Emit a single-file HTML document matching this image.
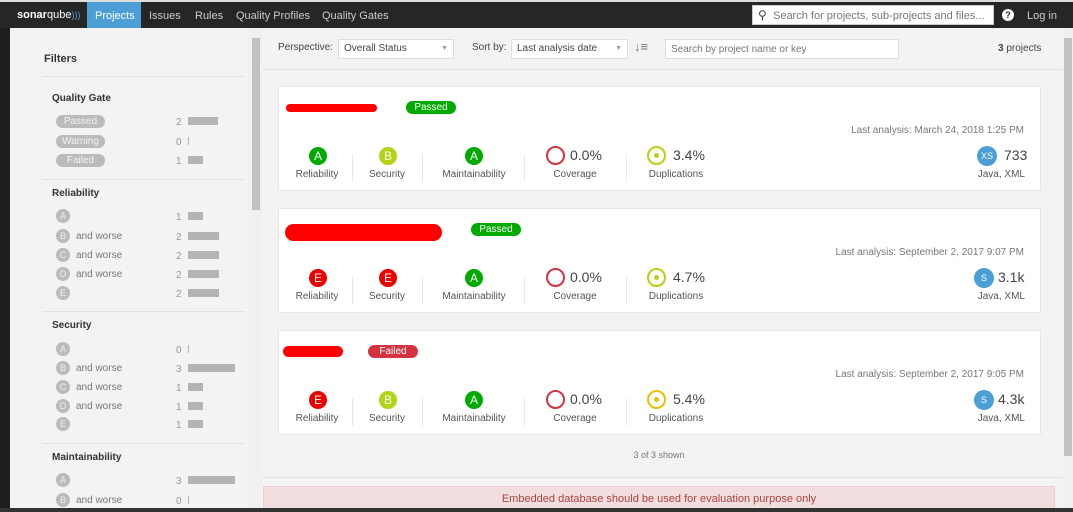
<!DOCTYPE html>
<html><head><meta charset="utf-8"><style>
*{box-sizing:border-box;margin:0;padding:0}
body{width:1073px;height:512px;overflow:hidden;background:#f3f3f3;font-family:"Liberation Sans",sans-serif;color:#444;position:relative;font-size:11px}
.a{position:absolute}
.nav{left:0;top:0;width:1073px;height:28px;background:#262626;border-top:2px solid #ddd}
.nav span{position:absolute;top:8px;color:#ccc;font-size:11px}
.lt{left:0;top:0;width:10px;height:512px;background:#1e1e1e}
.side{left:10px;top:28px;width:238px;height:484px;background:#f3f3f3}
.sb{left:248px;top:28px;width:14px;height:484px;background:#f0f0f0}
.hr{height:1px;background:#e2e2e2}
.h{font-weight:bold;font-size:11px;color:#333}
.pill{background:#bbb;color:#f3f3f3;border-radius:8px;width:49px;height:13px;text-align:center;font-size:10px;line-height:13px}
.rc{width:14px;height:14px;border-radius:50%;background:#bbb;color:#eee;font-size:9px;text-align:center;line-height:14px}
.aw{color:#777;font-size:10px}
.num{color:#999;font-size:10px;margin-top:2px}
.bar{background:#b4b4b4;height:8px}
.card{left:278px;width:763px;height:105px;background:#fff;border:1px solid #e6e6e6}
.c{position:absolute;width:18px;height:18px;border-radius:50%;color:#fff;text-align:center;line-height:18px;font-size:12px}
.lb{position:absolute;font-size:10px;color:#555;text-align:center;width:100px}
.dv{position:absolute;width:1px;height:28px;background:#e8e8e8}
.badge{position:absolute;height:13px;border-radius:7px;color:#fff;font-size:10px;text-align:center;line-height:13px;width:50px}
.la{position:absolute;right:16px;font-size:10px;color:#777}
.pct{position:absolute;font-size:14px;color:#444}
</style></head><body>
<div class="a lt"></div>
<div class="a nav">
<span style="left:17px;top:7px;color:#fff;font-size:11px"><b>sonar</b>qube<span style="position:static;color:#4b9fd5;font-size:9px">)))</span></span>
<div class="a" style="left:87px;top:0;width:54px;height:26px;background:#4b9fd5"></div>
<span style="left:95px;color:#fff">Projects</span>
<span style="left:149px">Issues</span>
<span style="left:195px">Rules</span>
<span style="left:236px">Quality Profiles</span>
<span style="left:322px">Quality Gates</span>
<div class="a" style="left:752px;top:3px;width:242px;height:20px;background:#fff;border:1px solid #ccc"></div>
<span style="left:758px;top:6px;color:#444;font-size:12px">&#9906;</span>
<span style="left:773px;color:#777">Search for projects, sub-projects and files...</span>
<div class="a" style="left:1002px;top:7px;width:12px;height:12px;border-radius:50%;background:#fff;color:#262626;font-size:9px;font-weight:bold;text-align:center;line-height:12px">?</div>
<span style="left:1027px">Log in</span>
</div>
<div class="a side"></div>
<div class="a sb"><div class="a" style="left:4px;top:10px;width:8px;height:172px;background:#c1c1c1"></div></div>
<div class="a" style="left:1063px;top:28px;width:10px;height:484px;background:#f0f0f0"><div class="a" style="left:1px;top:10px;width:8px;height:418px;background:#c1c1c1"></div></div>

<div class="a h" style="left:44px;top:53px">Filters</div>
<div class="a hr" style="left:42px;top:76px;width:203px"></div>
<div class="a h" style="left:52px;top:93px;font-size:10px">Quality Gate</div>
<div class="a pill" style="left:56px;top:115px">Passed</div><div class="a num" style="left:176px;top:115px">2</div><div class="a bar" style="left:188px;top:117px;width:30px"></div>
<div class="a pill" style="left:56px;top:135px">Warning</div><div class="a num" style="left:176px;top:135px">0</div><div class="a bar" style="left:188px;top:137px;width:1px"></div>
<div class="a pill" style="left:56px;top:154px">Failed</div><div class="a num" style="left:176px;top:154px">1</div><div class="a bar" style="left:188px;top:156px;width:15px"></div>
<div class="a hr" style="left:42px;top:179px;width:203px"></div>
<div class="a h" style="left:52px;top:188px;font-size:10px">Reliability</div>
<div class="a rc" style="left:56px;top:209px">A</div><div class="a num" style="left:176px;top:210px">1</div><div class="a bar" style="left:188px;top:212px;width:15px"></div>
<div class="a rc" style="left:56px;top:229px">B</div><div class="a aw" style="left:76px;top:231px">and worse</div><div class="a num" style="left:176px;top:230px">2</div><div class="a bar" style="left:188px;top:232px;width:31px"></div>
<div class="a rc" style="left:56px;top:248px">C</div><div class="a aw" style="left:76px;top:250px">and worse</div><div class="a num" style="left:176px;top:249px">2</div><div class="a bar" style="left:188px;top:251px;width:31px"></div>
<div class="a rc" style="left:56px;top:267px">D</div><div class="a aw" style="left:76px;top:269px">and worse</div><div class="a num" style="left:176px;top:268px">2</div><div class="a bar" style="left:188px;top:270px;width:31px"></div>
<div class="a rc" style="left:56px;top:286px">E</div><div class="a num" style="left:176px;top:287px">2</div><div class="a bar" style="left:188px;top:289px;width:31px"></div>
<div class="a hr" style="left:42px;top:311px;width:203px"></div>
<div class="a h" style="left:52px;top:320px;font-size:10px">Security</div>
<div class="a rc" style="left:56px;top:342px">A</div><div class="a num" style="left:176px;top:343px">0</div><div class="a bar" style="left:188px;top:345px;width:1px"></div>
<div class="a rc" style="left:56px;top:361px">B</div><div class="a aw" style="left:76px;top:363px">and worse</div><div class="a num" style="left:176px;top:362px">3</div><div class="a bar" style="left:188px;top:364px;width:47px"></div>
<div class="a rc" style="left:56px;top:380px">C</div><div class="a aw" style="left:76px;top:382px">and worse</div><div class="a num" style="left:176px;top:381px">1</div><div class="a bar" style="left:188px;top:383px;width:15px"></div>
<div class="a rc" style="left:56px;top:399px">D</div><div class="a aw" style="left:76px;top:401px">and worse</div><div class="a num" style="left:176px;top:400px">1</div><div class="a bar" style="left:188px;top:402px;width:15px"></div>
<div class="a rc" style="left:56px;top:417px">E</div><div class="a num" style="left:176px;top:418px">1</div><div class="a bar" style="left:188px;top:420px;width:15px"></div>
<div class="a hr" style="left:42px;top:443px;width:203px"></div>
<div class="a h" style="left:52px;top:452px;font-size:10px">Maintainability</div>
<div class="a rc" style="left:56px;top:473px">A</div><div class="a num" style="left:176px;top:474px">3</div><div class="a bar" style="left:188px;top:476px;width:47px"></div>
<div class="a rc" style="left:56px;top:493px">B</div><div class="a aw" style="left:76px;top:495px">and worse</div><div class="a num" style="left:176px;top:494px">0</div><div class="a bar" style="left:188px;top:496px;width:1px"></div>

<!-- toolbar -->
<div class="a" style="left:278px;top:42px;color:#444;font-size:10px">Perspective:</div>
<div class="a" style="left:338px;top:39px;width:116px;height:20px;background:#fff;border:1px solid #ddd;padding:3px 5px;font-size:10px">Overall Status<span style="float:right;color:#999;font-size:7px;margin-top:2px">&#9660;</span></div>
<div class="a" style="left:472px;top:42px;color:#444;font-size:10px">Sort by:</div>
<div class="a" style="left:511px;top:39px;width:117px;height:20px;background:#fff;border:1px solid #ddd;padding:3px 5px;font-size:10px">Last analysis date<span style="float:right;color:#999;font-size:7px;margin-top:2px">&#9660;</span></div>
<div class="a" style="left:634px;top:39px;color:#777;font-size:13px;font-weight:bold">&#8595;&#8801;</div>
<div class="a" style="left:665px;top:39px;width:234px;height:20px;background:#fff;border:1px solid #ddd;padding:4px 5px;font-size:10px;color:#777">Search by project name or key</div>
<div class="a" style="left:998px;top:43px;font-size:10px;color:#444"><b>3</b> projects</div>
<div class="a hr" style="left:263px;top:69px;width:800px"></div>

<!-- card1 -->
<div class="a card" style="top:86px">
<div class="a" style="left:7px;top:17px;width:91px;height:8px;background:#f00;border-radius:4px"></div>
<div class="badge" style="left:127px;top:14px;background:#0a0">Passed</div>
<div class="la" style="top:38px">Last analysis: March 24, 2018 1:25 PM</div>
<div class="c" style="left:30px;top:60px;background:#0a0">A</div><div class="lb" style="left:-12px;top:82px">Reliability</div>
<div class="dv" style="left:73px;top:67px"></div>
<div class="c" style="left:100px;top:60px;background:#b0d513">B</div><div class="lb" style="left:58px;top:82px">Security</div>
<div class="dv" style="left:143px;top:67px"></div>
<div class="c" style="left:186px;top:60px;background:#0a0">A</div><div class="lb" style="left:145px;top:82px">Maintainability</div>
<div class="dv" style="left:245px;top:67px"></div>
<div class="c" style="left:267px;top:59px;border:2px solid #d4333f;width:19px;height:19px"></div><div class="pct" style="left:291px;top:60px">0.0%</div><div class="lb" style="left:246px;top:82px">Coverage</div>
<div class="dv" style="left:347px;top:67px"></div>
<div class="c" style="left:368px;top:59px;border:2px solid #b0d513;width:19px;height:19px"><div style="position:absolute;left:5px;top:5px;width:5px;height:5px;border-radius:50%;background:#b0d513"></div></div><div class="pct" style="left:394px;top:60px">3.4%</div><div class="lb" style="left:347px;top:82px">Duplications</div>
<div class="c" style="left:698px;top:59px;width:20px;height:20px;line-height:20px;background:#4b9fd5;font-size:9px">XS</div><div class="pct" style="left:725px;top:60px">733</div><div class="lb" style="left:646px;top:82px;text-align:right">Java, XML</div>
</div>
<!-- card2 -->
<div class="a card" style="top:208px">
<div class="a" style="left:6px;top:15px;width:157px;height:17px;background:#f00;border-radius:9px"></div>
<div class="badge" style="left:192px;top:14px;background:#0a0">Passed</div>
<div class="la" style="top:38px">Last analysis: September 2, 2017 9:07 PM</div>
<div class="c" style="left:30px;top:60px;background:#e00">E</div><div class="lb" style="left:-12px;top:82px">Reliability</div>
<div class="dv" style="left:73px;top:67px"></div>
<div class="c" style="left:100px;top:60px;background:#e00">E</div><div class="lb" style="left:58px;top:82px">Security</div>
<div class="dv" style="left:143px;top:67px"></div>
<div class="c" style="left:186px;top:60px;background:#0a0">A</div><div class="lb" style="left:145px;top:82px">Maintainability</div>
<div class="dv" style="left:245px;top:67px"></div>
<div class="c" style="left:267px;top:59px;border:2px solid #d4333f;width:19px;height:19px"></div><div class="pct" style="left:291px;top:60px">0.0%</div><div class="lb" style="left:246px;top:82px">Coverage</div>
<div class="dv" style="left:347px;top:67px"></div>
<div class="c" style="left:368px;top:59px;border:2px solid #b0d513;width:19px;height:19px"><div style="position:absolute;left:5px;top:5px;width:5px;height:5px;border-radius:50%;background:#b0d513"></div></div><div class="pct" style="left:394px;top:60px">4.7%</div><div class="lb" style="left:347px;top:82px">Duplications</div>
<div class="c" style="left:695px;top:59px;width:20px;height:20px;line-height:20px;background:#4b9fd5;font-size:9px">S</div><div class="pct" style="left:719px;top:60px">3.1k</div><div class="lb" style="left:646px;top:82px;text-align:right">Java, XML</div>
</div>
<!-- card3 -->
<div class="a card" style="top:330px">
<div class="a" style="left:4px;top:15px;width:60px;height:11px;background:#f00;border-radius:6px"></div>
<div class="badge" style="left:89px;top:14px;background:#d4333f">Failed</div>
<div class="la" style="top:38px">Last analysis: September 2, 2017 9:05 PM</div>
<div class="c" style="left:30px;top:60px;background:#e00">E</div><div class="lb" style="left:-12px;top:82px">Reliability</div>
<div class="dv" style="left:73px;top:67px"></div>
<div class="c" style="left:100px;top:60px;background:#b0d513">B</div><div class="lb" style="left:58px;top:82px">Security</div>
<div class="dv" style="left:143px;top:67px"></div>
<div class="c" style="left:186px;top:60px;background:#0a0">A</div><div class="lb" style="left:145px;top:82px">Maintainability</div>
<div class="dv" style="left:245px;top:67px"></div>
<div class="c" style="left:267px;top:59px;border:2px solid #d4333f;width:19px;height:19px"></div><div class="pct" style="left:291px;top:60px">0.0%</div><div class="lb" style="left:246px;top:82px">Coverage</div>
<div class="dv" style="left:347px;top:67px"></div>
<div class="c" style="left:368px;top:59px;border:2px solid #eabe06;width:19px;height:19px"><div style="position:absolute;left:5px;top:5px;width:5px;height:5px;border-radius:50%;background:#eabe06"></div></div><div class="pct" style="left:394px;top:60px">5.4%</div><div class="lb" style="left:347px;top:82px">Duplications</div>
<div class="c" style="left:695px;top:59px;width:20px;height:20px;line-height:20px;background:#4b9fd5;font-size:9px">S</div><div class="pct" style="left:719px;top:60px">4.3k</div><div class="lb" style="left:646px;top:82px;text-align:right">Java, XML</div>
</div>

<div class="a" style="left:559px;top:450px;width:200px;text-align:center;font-size:9px;color:#777">3 of 3 shown</div>
<div class="a hr" style="left:263px;top:477px;width:800px"></div>
<div class="a" style="left:263px;top:486px;width:792px;height:26px;background:#f2dede;border:1px solid #ebccd1;color:#a94442;text-align:center;font-size:11px;padding-top:6px">Embedded database should be used for evaluation purpose only</div>
<div class="a" style="left:0;top:508px;width:1073px;height:4px;background:#333"></div>
</body></html>
